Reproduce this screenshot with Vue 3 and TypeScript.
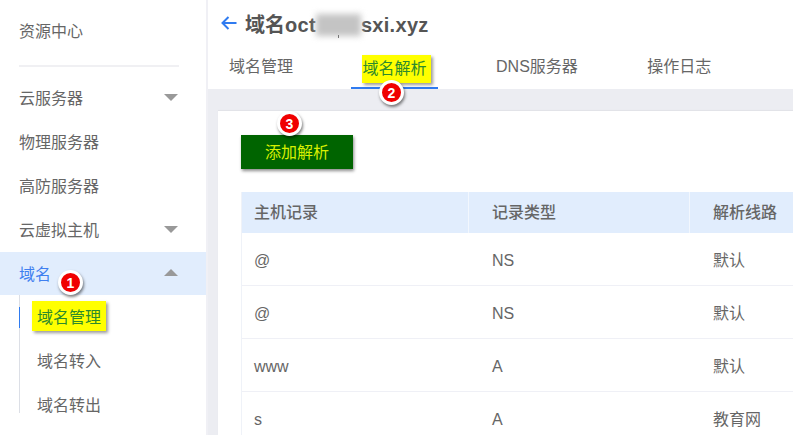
<script setup lang="ts">
const topItems = [
  { label: '云服务器', arrow: true },
  { label: '物理服务器', arrow: false },
  { label: '高防服务器', arrow: false },
  { label: '云虚拟主机', arrow: true },
]
const rows = [
  ['@', 'NS', '默认'],
  ['@', 'NS', '默认'],
  ['www', 'A', '默认'],
  ['s', 'A', '教育网'],
]
</script>

<template>
  <div class="page">
    <aside class="side">
      <div class="side-title">资源中心</div>
      <div class="side-rule"></div>
      <div v-for="item in topItems" :key="item.label" class="side-item">
        <span>{{ item.label }}</span>
        <i v-if="item.arrow" class="caret"></i>
      </div>
      <div class="side-item active">
        <span>域名</span>
        <i class="caret up"></i>
        <b class="mark mark-1">1</b>
      </div>
      <div class="sub">
        <div class="sub-item current"><span class="hl">域名管理</span></div>
        <div class="sub-item">域名转入</div>
        <div class="sub-item">域名转出</div>
      </div>
    </aside>
    <main class="main">
      <header class="head">
        <div class="title-row">
          <svg class="back" width="16" height="14" viewBox="0 0 16 14" fill="none" stroke="#2f7bf0" stroke-width="2">
            <path d="M15.5 7H1.8M7.5 1 1.5 7l6 6" />
          </svg>
          <h1 class="title">域名<span class="lat">oct</span><span class="blur-box"><span class="blurred"></span><i class="tick"></i></span><span class="lat">sxi.xyz</span></h1>
        </div>
        <nav class="tabs">
          <div class="tab">域名管理</div>
          <div class="tab on">
            <span class="hl tab-hl">域名解析</span>
            <b class="mark mark-2">2</b>
          </div>
          <div class="tab">DNS服务器</div>
          <div class="tab">操作日志</div>
        </nav>
      </header>
      <section class="card">
        <div class="btn-wrap">
          <button class="add" type="button">添加解析</button>
          <b class="mark mark-3">3</b>
        </div>
        <div class="table">
          <div class="tr th">
            <div>主机记录</div>
            <div>记录类型</div>
            <div>解析线路</div>
          </div>
          <div v-for="(r, i) in rows" :key="i" class="tr td">
            <div v-for="(c, j) in r" :key="j">{{ c }}</div>
          </div>
        </div>
      </section>
    </main>
  </div>
</template>

<style>
html, body { margin: 0; overflow: hidden; background: #fff; }
</style>

<style scoped>
.page {
  display: flex;
  width: 793px;
  height: 435px;
  overflow: hidden;
  font-family: "Liberation Sans", "Noto Sans CJK SC", sans-serif;
  font-size: 16px;
  color: #666;
}
.side {
  flex: none;
  width: 206px;
  border-right: 2px solid #f0f0f5;
  background: #fff;
}
.side-title {
  height: 65px;
  padding: 0 19px;
  box-sizing: border-box;
  line-height: 63px;
}
.side-rule {
  width: 160px;
  height: 2px;
  margin: 0 0 9px 19px;
  background: #f0f0f3;
}
.side-item {
  position: relative;
  display: flex;
  align-items: center;
  justify-content: space-between;
  box-sizing: border-box;
  height: 44px;
  padding: 0 28px 2px 19px;
}
.side-item.active {
  height: 43px;
  background: #e1edfd;
  color: #3f7ff0;
}
.caret {
  width: 0;
  height: 0;
  border-left: 7px solid transparent;
  border-right: 7px solid transparent;
  border-top: 7px solid #999;
}
.caret.up {
  border-top: 0;
  border-bottom: 7px solid #999;
}
.sub {
  margin: 0 0 0 19px;
  border-left: 1px solid #dcdfe6;
  height: 118px;
}
.sub-item {
  position: relative;
  display: flex;
  align-items: center;
  box-sizing: border-box;
  height: 44px;
  padding: 0 0 2px 17px;
}
.sub-item.current::before {
  content: "";
  position: absolute;
  left: -1px;
  top: 12px;
  width: 1px;
  height: 21px;
  background: #2f7bf0;
}
.hl {
  margin: 0 -5px;
  padding: 3px 5px;
  background: #ffff00;
  color: #2d8a2d;
  box-shadow: 2px 2px 3px rgba(0, 0, 0, 0.4);
}
.tab-hl {
  display: inline-block;
  margin: 0 -4px 0 -1px;
  padding: 2px 4px 2px 1px;
  line-height: 24px;
}
.mark {
  position: absolute;
  display: flex;
  align-items: center;
  justify-content: center;
  box-sizing: border-box;
  width: 25px;
  height: 25px;
  border: 3px solid #fff;
  border-radius: 50%;
  background: #f00000;
  color: #fff;
  font-size: 14px;
  font-weight: 700;
  box-shadow: 1px 2px 3px rgba(0, 0, 0, 0.5);
}
.mark-1 { left: 58px; top: 18px; }
.mark-2 { left: 28px; top: 30px; z-index: 2; }
.mark-3 { left: 36px; top: -24px; }
.main {
  flex: 1;
  min-width: 0;
  background: #ecedf2;
}
.head {
  height: 89px;
  background: #fff;
}
.title-row {
  display: flex;
  align-items: center;
  height: 50px;
  padding: 0 0 4px 13px;
  box-sizing: border-box;
}
.back { margin-right: 8px; }
.title {
  margin: 0;
  font-size: 20px;
  font-weight: 700;
  color: #555;
  white-space: nowrap;
}
.lat { letter-spacing: 0.3px; }
.blur-box {
  position: relative;
  display: inline-block;
  width: 45px;
  height: 22px;
  vertical-align: -4px;
}
.blurred {
  display: block;
  width: 45px;
  height: 22px;
  background: #c4c4c4;
  filter: blur(3px);
}
.tick {
  position: absolute;
  left: 22px;
  top: 21px;
  width: 1px;
  height: 3px;
  background: #777;
}
.tabs {
  display: flex;
  gap: 46.5px;
  padding-left: 9.5px;
  height: 39px;
}
.tab {
  position: relative;
  box-sizing: border-box;
  height: 39px;
  padding: 5px 11.5px 0;
  line-height: 24px;
  white-space: nowrap;
}
.tab.on { border-bottom: 2px solid #2f7bf0; }
.card {
  margin: 22px 0 0 10px;
  height: 324px;
  padding: 24px 0 0 23px;
  box-sizing: border-box;
  background: #fff;
  box-shadow: 0 -1px 1px rgba(0, 0, 0, 0.04);
}
.btn-wrap {
  position: relative;
  width: 112px;
}
.add {
  display: block;
  width: 112px;
  height: 34px;
  padding: 0 0 3px;
  border: 0;
  background: #006400;
  color: #d8f000;
  font: inherit;
  box-shadow: 1px 2px 3px rgba(0, 0, 0, 0.45);
}
.table {
  margin-top: 23px;
  border-left: 1px solid #eff2f8;
}
.tr {
  display: grid;
  grid-template-columns: 226px 221px 1fr;
}
.tr > div {
  padding-left: 12px;
  box-sizing: border-box;
  display: flex;
  align-items: center;
}
.th {
  height: 41px;
  background: #e1edfd;
  font-weight: 500;
  color: #666;
}
.th > div { padding-bottom: 3px; }
.th > div + div { border-left: 1px solid #f2f7fe; padding-left: 23px; }
.td {
  height: 53px;
  border-bottom: 1px solid #eff0f6;
  box-sizing: border-box;
}
.td > div { padding-top: 4px; }
.td > div + div { padding-left: 24px; }
.td > div:last-child { padding-top: 0; }
</style>
